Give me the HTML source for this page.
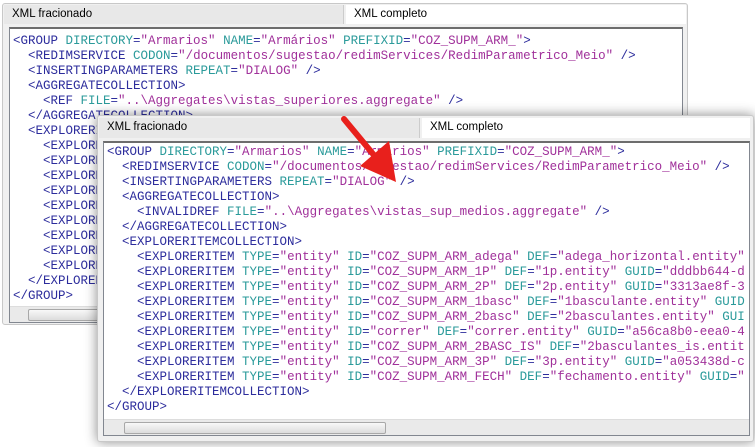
<!DOCTYPE html>
<html><head><meta charset="utf-8"><style>
body{margin:0;width:755px;height:447px;background:#fff;position:relative;overflow:hidden;font-family:"Liberation Sans",sans-serif}
.win{position:absolute;background:#f0f0f0;border:1px solid #c8c8c8;border-radius:3px}
.tab{position:absolute;font-size:11.5px;color:#000;padding-left:8px;box-sizing:border-box;line-height:19px}
.ed{position:absolute;background:#fff;border:1px solid #828790;border-top:2px solid #6d6d6d;overflow:hidden}
pre{margin:0;font-family:"Liberation Mono",monospace;font-size:12.5px;line-height:15px;color:#2c2c9c;white-space:pre}
.a{color:#2a9a9a}.v{color:#a0309a}
.sb{position:absolute;background:#eaeaea;border-top:1px solid #ddd}
.th{position:absolute;background:linear-gradient(#f8f8f8,#dcdcdc);border:1px solid #a8a8a8;border-radius:2px}
</style></head><body>

<div class="win" style="left:2px;top:3px;width:684px;height:320px;">
 <div class="tab" style="left:1px;top:1px;width:340px;height:19px;background:#e8e8e8;border-right:1px solid #ccc">XML fracionado</div>
 <div class="tab" style="left:343px;top:1px;width:340px;height:19px;background:#fff">XML completo</div>
 <div class="ed" style="left:6px;top:23px;width:672px;height:293px;">
<pre style="padding:5px 0 0 3px">&lt;GROUP <span class="a">DIRECTORY</span>=<span class="v">"Armarios"</span> <span class="a">NAME</span>=<span class="v">"Armários"</span> <span class="a">PREFIXID</span>=<span class="v">"COZ_SUPM_ARM_"</span>&gt;
  &lt;REDIMSERVICE <span class="a">CODON</span>=<span class="v">"/documentos/sugestao/redimServices/RedimParametrico_Meio"</span> /&gt;
  &lt;INSERTINGPARAMETERS <span class="a">REPEAT</span>=<span class="v">"DIALOG"</span> /&gt;
  &lt;AGGREGATECOLLECTION&gt;
    &lt;REF <span class="a">FILE</span>=<span class="v">"..\Aggregates\vistas_superiores.aggregate"</span> /&gt;
  &lt;/AGGREGATECOLLECTION&gt;
  &lt;EXPLORERITEMCOLLECTION&gt;
    &lt;EXPLORERITEM
    &lt;EXPLORERITEM
    &lt;EXPLORERITEM
    &lt;EXPLORERITEM
    &lt;EXPLORERITEM
    &lt;EXPLORERITEM
    &lt;EXPLORERITEM
    &lt;EXPLORERITEM
    &lt;EXPLORERITEM
  &lt;/EXPLORERITEMCOLLECTION&gt;
&lt;/GROUP&gt;</pre>
  <div class="sb" style="left:0;top:277px;width:672px;height:16px"><div class="th" style="left:18px;top:2px;width:300px;height:10px"></div></div>
 </div>
</div>

<div class="win" style="left:97px;top:115px;width:655px;height:325px;box-shadow:0 0 12px rgba(0,0,0,0.45)">
 <div class="tab" style="left:1px;top:2px;width:321px;height:20px;background:#e8e8e8;border-right:1px solid #ccc">XML fracionado</div>
 <div class="tab" style="left:324px;top:2px;width:328px;height:20px;background:#fff">XML completo</div>
 <div class="ed" style="left:5px;top:25px;width:645px;height:292px;">
<pre style="padding:2px 0 0 3px">&lt;GROUP <span class="a">DIRECTORY</span>=<span class="v">"Armarios"</span> <span class="a">NAME</span>=<span class="v">"Armários"</span> <span class="a">PREFIXID</span>=<span class="v">"COZ_SUPM_ARM_"</span>&gt;
  &lt;REDIMSERVICE <span class="a">CODON</span>=<span class="v">"/documentos/sugestao/redimServices/RedimParametrico_Meio"</span> /&gt;
  &lt;INSERTINGPARAMETERS <span class="a">REPEAT</span>=<span class="v">"DIALOG"</span> /&gt;
  &lt;AGGREGATECOLLECTION&gt;
    &lt;INVALIDREF <span class="a">FILE</span>=<span class="v">"..\Aggregates\vistas_sup_medios.aggregate"</span> /&gt;
  &lt;/AGGREGATECOLLECTION&gt;
  &lt;EXPLORERITEMCOLLECTION&gt;
    &lt;EXPLORERITEM <span class="a">TYPE</span>=<span class="v">"entity"</span> <span class="a">ID</span>=<span class="v">"COZ_SUPM_ARM_adega"</span> <span class="a">DEF</span>=<span class="v">"adega_horizontal.entity"</span> <span class="a">GUID</span>=<span class="v">"</span>
    &lt;EXPLORERITEM <span class="a">TYPE</span>=<span class="v">"entity"</span> <span class="a">ID</span>=<span class="v">"COZ_SUPM_ARM_1P"</span> <span class="a">DEF</span>=<span class="v">"1p.entity"</span> <span class="a">GUID</span>=<span class="v">"dddbb644-d</span>
    &lt;EXPLORERITEM <span class="a">TYPE</span>=<span class="v">"entity"</span> <span class="a">ID</span>=<span class="v">"COZ_SUPM_ARM_2P"</span> <span class="a">DEF</span>=<span class="v">"2p.entity"</span> <span class="a">GUID</span>=<span class="v">"3313ae8f-3</span>
    &lt;EXPLORERITEM <span class="a">TYPE</span>=<span class="v">"entity"</span> <span class="a">ID</span>=<span class="v">"COZ_SUPM_ARM_1basc"</span> <span class="a">DEF</span>=<span class="v">"1basculante.entity"</span> <span class="a">GUID</span>
    &lt;EXPLORERITEM <span class="a">TYPE</span>=<span class="v">"entity"</span> <span class="a">ID</span>=<span class="v">"COZ_SUPM_ARM_2basc"</span> <span class="a">DEF</span>=<span class="v">"2basculantes.entity"</span> <span class="a">GUI</span>
    &lt;EXPLORERITEM <span class="a">TYPE</span>=<span class="v">"entity"</span> <span class="a">ID</span>=<span class="v">"correr"</span> <span class="a">DEF</span>=<span class="v">"correr.entity"</span> <span class="a">GUID</span>=<span class="v">"a56ca8b0-eea0-4</span>
    &lt;EXPLORERITEM <span class="a">TYPE</span>=<span class="v">"entity"</span> <span class="a">ID</span>=<span class="v">"COZ_SUPM_ARM_2BASC_IS"</span> <span class="a">DEF</span>=<span class="v">"2basculantes_is.entit</span>
    &lt;EXPLORERITEM <span class="a">TYPE</span>=<span class="v">"entity"</span> <span class="a">ID</span>=<span class="v">"COZ_SUPM_ARM_3P"</span> <span class="a">DEF</span>=<span class="v">"3p.entity"</span> <span class="a">GUID</span>=<span class="v">"a053438d-c</span>
    &lt;EXPLORERITEM <span class="a">TYPE</span>=<span class="v">"entity"</span> <span class="a">ID</span>=<span class="v">"COZ_SUPM_ARM_FECH"</span> <span class="a">DEF</span>=<span class="v">"fechamento.entity"</span> <span class="a">GUID</span>=<span class="v">"</span>
  &lt;/EXPLORERITEMCOLLECTION&gt;
&lt;/GROUP&gt;</pre>
  <div class="sb" style="left:0;top:276px;width:645px;height:16px"><div class="th" style="left:20px;top:2px;width:260px;height:10px"></div></div>
 </div>
</div>

<svg style="position:absolute;left:0;top:0" width="755" height="447">
 <line x1="344" y1="119" x2="378" y2="160" stroke="#e8201c" stroke-width="6" stroke-linecap="round"/>
 <polygon points="396,182 360,166 389,141" fill="#e8201c"/>
</svg>
</body></html>
